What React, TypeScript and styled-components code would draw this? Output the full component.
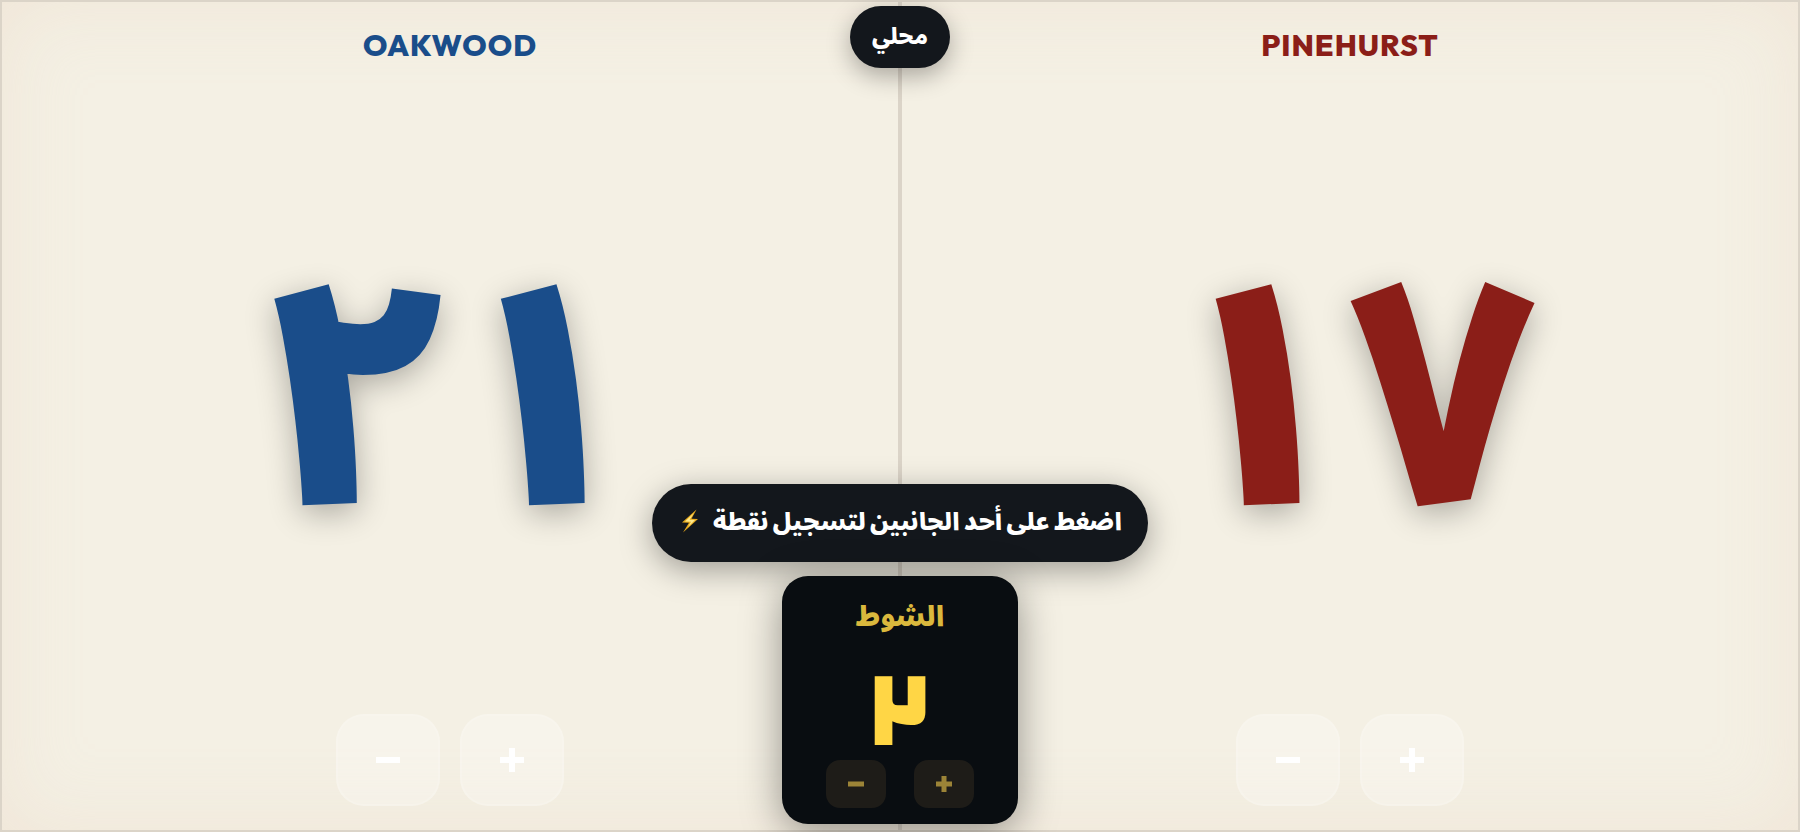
import React, { useState } from "react";
import styled, { createGlobalStyle } from "styled-components";

const GlobalStyle = createGlobalStyle`
  *, *::before, *::after { box-sizing: border-box; }
  body {
    margin: 0;
    background: #f4f0e4;
    font-family: Outfit, "Noto Sans Arabic", Lato, "DejaVu Sans", sans-serif;
  }
  button { font: inherit; cursor: pointer; }
`;

const Board = styled.main`
  position: relative;
  display: grid;
  grid-template-columns: 1fr 1fr;
  min-height: 100vh;
  background: #f4f0e4;
  box-shadow: inset 0 0 80px rgba(232, 205, 185, 0.3);
`;

const Side = styled.section<{ $color: string }>`
  display: flex;
  flex-direction: column;
  align-items: center;
  padding: 24px;
  color: ${(p) => p.$color};
  border: 2px solid #dbd4c8;
`;

const TeamName = styled.h2`
  margin: 0;
  font-size: 30px;
  line-height: 38px;
  font-weight: 800;
  letter-spacing: 1px;
`;

const ScoreButton = styled.button`
  flex: 1;
  align-self: stretch;
  padding: 28px 0 0;
  border: 0;
  background: none;
  color: inherit;
  direction: ltr;
  && {
    font-family: "Noto Sans Arabic", "DejaVu Sans", sans-serif;
    font-size: 316px;
    font-weight: 900;
    line-height: 1;
  }
  text-shadow: 0 8px 32px rgba(0, 0, 0, 0.3);
`;

const Controls = styled.div<{ $gap: number }>`
  display: flex;
  justify-content: center;
  gap: ${(p) => p.$gap}px;
`;

const SideStep = styled.button`
  display: grid;
  place-items: center;
  width: 104px;
  height: 92px;
  padding: 0;
  border: 2px solid rgba(255, 255, 255, 0.12);
  border-radius: 28px;
  background: rgba(255, 255, 255, 0.26);
  color: #fff;
`;

const PeriodStep = styled.button`
  display: grid;
  place-items: center;
  width: 60px;
  height: 48px;
  padding: 0;
  border: 0;
  border-radius: 14px;
  background: #1e1c18;
  color: #9c8437;
`;

const ModePill = styled.button`
  position: absolute;
  top: 6px;
  left: 50%;
  transform: translateX(-50%);
  width: 100px;
  height: 62px;
  padding: 0 0 2px;
  border: 0;
  border-radius: 31px;
  background: #13171c;
  color: #fff;
  box-shadow: 0 8px 24px rgba(0, 0, 0, 0.3);
  && {
    font-size: 22px;
    line-height: 32px;
    font-weight: 900;
  }
`;

const BottomStack = styled.div`
  position: absolute;
  bottom: 8px;
  left: 50%;
  transform: translateX(-50%);
  display: flex;
  flex-direction: column;
  align-items: center;
  gap: 14px;
  pointer-events: none;
`;

const Hint = styled.p`
  display: flex;
  align-items: center;
  justify-content: space-between;
  gap: 4px;
  width: 496px;
  height: 78px;
  margin: 0;
  padding: 0 26px 4px 28px;
  border-radius: 39px;
  background: #13171c;
  color: #fff;
  font-size: 24px;
  line-height: 32px;
  font-weight: 900;
  white-space: nowrap;
  box-shadow: 0 8px 32px rgba(0, 0, 0, 0.35);
`;

const PeriodCard = styled.section`
  display: flex;
  flex-direction: column;
  align-items: center;
  width: 236px;
  height: 248px;
  padding: 16px;
  border-radius: 26px;
  background: #090d11;
  color: #ffd645;
  pointer-events: auto;
  box-shadow: 0 8px 40px rgba(0, 0, 0, 0.4);
`;

const PeriodLabel = styled.h3`
  margin: 0;
  font-size: 28px;
  line-height: 48px;
  font-weight: 900;
  opacity: 0.85;
`;

const PeriodValue = styled.output`
  flex: 1;
  min-height: 0;
  font-family: Changa, "DejaVu Sans", sans-serif;
  font-size: 110px;
  line-height: 142px;
  font-weight: 800;
`;

const BoltIcon = styled.svg`
  flex: none;
`;

function Sign({ plus, size, weight }: { plus?: boolean; size: number; weight: number }) {
  const c = size / 2;
  return (
    <svg width={size} height={size} stroke="currentColor" strokeWidth={weight} aria-hidden="true">
      <path d={`M0 ${c}H${size}${plus ? `M${c} 0V${size}` : ""}`} />
    </svg>
  );
}

function Bolt() {
  return (
    <BoltIcon width="20" height="24" viewBox="0 0 20 24" aria-hidden="true">
      <path d="M16.500 0.500L2 13.500L9 13.800L3 23.500L18 10L11.500 9.800Z" fill="#e6a91c" />
      <path d="M14 4L5 12.500L11 12.800L8 18L15 11L9.500 10.800Z" fill="#ffe98a" />
    </BoltIcon>
  );
}

const arabic = (n: number) => n.toLocaleString("ar-EG");

function TeamSide({ name, color, start }: { name: string; color: string; start: number }) {
  const [score, setScore] = useState(start);
  const lower = () => setScore((s) => Math.max(0, s - 1));
  const raise = () => setScore((s) => s + 1);
  return (
    <Side $color={color}>
      <TeamName>{name}</TeamName>
      <ScoreButton onClick={raise}>{arabic(score)}</ScoreButton>
      <Controls $gap={20}>
        <SideStep aria-label={`${name} −`} onClick={lower}><Sign size={24} weight={6} /></SideStep>
        <SideStep aria-label={`${name} +`} onClick={raise}><Sign plus size={24} weight={6} /></SideStep>
      </Controls>
    </Side>
  );
}

export default function App() {
  const [period, setPeriod] = useState(2);
  return (
    <>
      <GlobalStyle />
      <Board>
        <TeamSide name="OAKWOOD" color="#1a4d8a" start={21} />
        <TeamSide name="PINEHURST" color="#8b1e18" start={17} />
        <ModePill>محلي</ModePill>
        <BottomStack>
          <Hint dir="rtl">
            <span>اضغط على أحد الجانبين لتسجيل نقطة</span>
            <Bolt />
          </Hint>
          <PeriodCard>
            <PeriodLabel>الشوط</PeriodLabel>
            <PeriodValue>{arabic(period)}</PeriodValue>
            <Controls $gap={28}>
              <PeriodStep aria-label="الشوط −" onClick={() => setPeriod((p) => Math.max(1, p - 1))}>
                <Sign size={16} weight={5} />
              </PeriodStep>
              <PeriodStep aria-label="الشوط +" onClick={() => setPeriod((p) => p + 1)}>
                <Sign plus size={16} weight={5} />
              </PeriodStep>
            </Controls>
          </PeriodCard>
        </BottomStack>
      </Board>
    </>
  );
}
